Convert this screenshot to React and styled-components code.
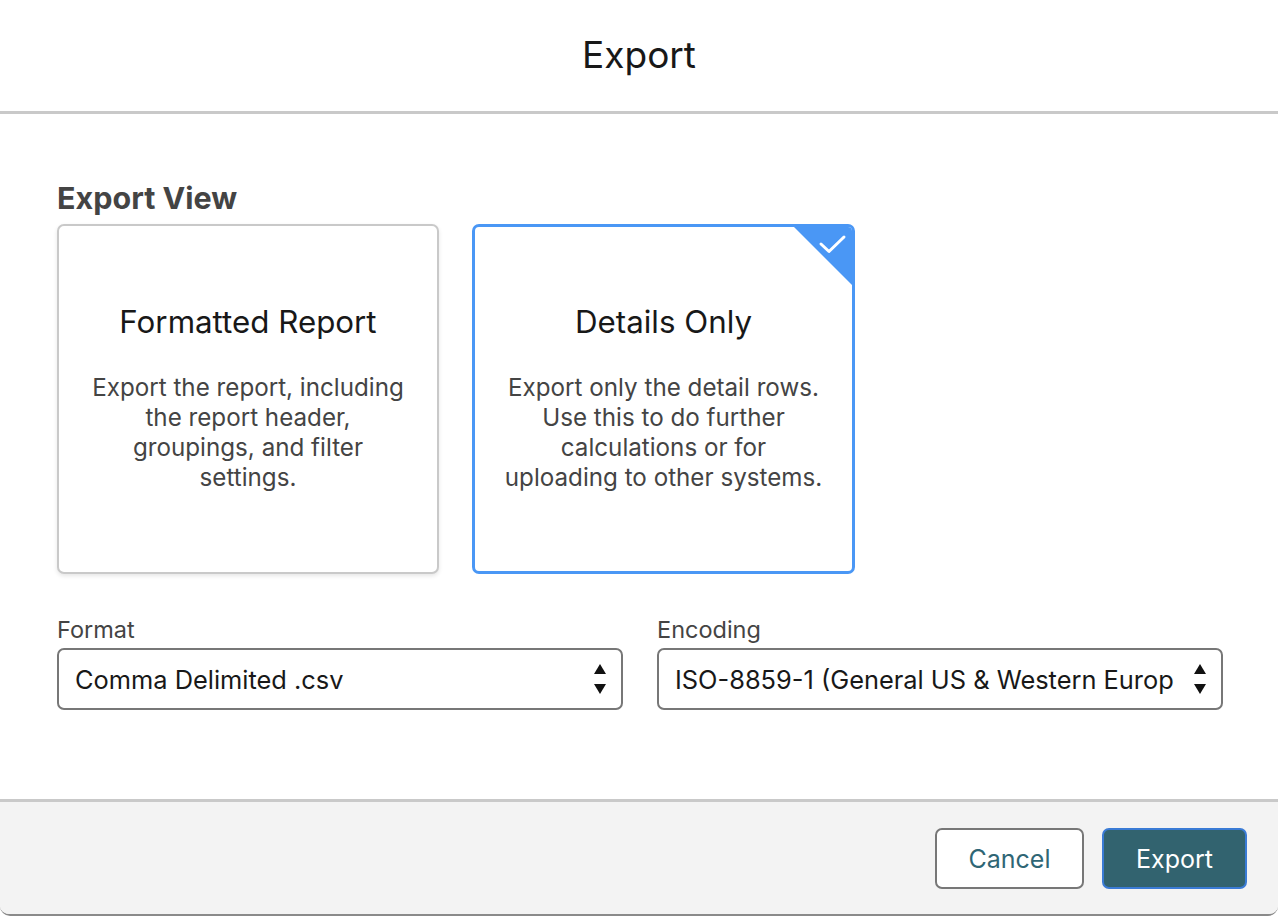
import React from "react";
import styled, { createGlobalStyle } from "styled-components";

const Global = createGlobalStyle`
  html, body { margin: 0; padding: 0; background: #ffffff; }
  body { font-family: Inter, "Liberation Sans", Arial, sans-serif; }
  * { box-sizing: border-box; }
`;

const Modal = styled.div`
  width: 1278px;
  height: 916px;
  display: flex;
  flex-direction: column;
  background: #fff;
  border-bottom: 2px solid #8a8a8a;
  border-radius: 0 0 10px 10px;
  overflow: hidden;
`;

const Header = styled.header`
  height: 114px;
  flex: none;
  display: flex;
  align-items: center;
  justify-content: center;
  border-bottom: 3px solid #c9c9c9;
  padding-bottom: 2px;
`;

const Title = styled.h1`
  margin: 0;
  font-weight: 400;
  font-size: 37px;
  line-height: 44px;
  color: #181818;
`;

const Body = styled.main`
  flex: 1;
  padding: 66px 55px 0 57px;
  display: flex;
  flex-direction: column;
`;

const SectionTitle = styled.h2`
  margin: 0 0 8px;
  font-size: 30.5px;
  line-height: 36px;
  font-weight: 700;
  color: #444444;
`;

const Cards = styled.div`
  display: flex;
  gap: 33px;
`;

const Card = styled.div`
  position: relative;
  width: ${(p) => (p.$selected ? "383px" : "382px")};
  height: 350px;
  border-radius: 7px;
  border: ${(p) => (p.$selected ? "3px solid #4a97f5" : "2px solid #c9c9c9")};
  box-shadow: ${(p) => (p.$selected ? "none" : "0 2px 4px rgba(0,0,0,0.1)")};
  background: #fff;
  display: flex;
  flex-direction: column;
  align-items: center;
  justify-content: center;
  gap: 34px;
  text-align: center;
  overflow: hidden;
`;

const CardTitle = styled.div`
  font-size: 31.3px;
  line-height: 34px;
  color: #181818;
`;

const CardText = styled.div`
  font-size: 24.2px;
  line-height: 30px;
  color: #444444;
  white-space: nowrap;
`;

const Corner = styled.div`
  position: absolute;
  top: 0;
  right: 0;
  width: 58px;
  height: 58px;
  svg { display: block; }
`;

const Fields = styled.div`
  margin-top: 42px;
  display: grid;
  grid-template-columns: 566px 566px;
  column-gap: 34px;
`;

const Field = styled.div`
  display: flex;
  flex-direction: column;
  gap: 4px;
`;

const Label = styled.label`
  font-size: 23.5px;
  line-height: 28px;
  color: #444444;
`;

const Select = styled.div`
  position: relative;
  height: 62px;
  border: 2px solid #777777;
  border-radius: 7px;
  display: flex;
  align-items: center;
  padding: 0 47px 0 16px;
  font-size: 25.4px;
  color: #181818;
`;

const SelectValue = styled.span`
  flex: 1;
  min-width: 0;
  white-space: nowrap;
  overflow: hidden;
`;

const Arrows = styled.span`
  position: absolute;
  right: 14px;
  top: 50%;
  transform: translateY(-50%);
  display: block;
  svg { display: block; }
`;

const Footer = styled.footer`
  flex: none;
  height: 115px;
  background: #f3f3f3;
  border-top: 3px solid #c9c9c9;
  display: flex;
  justify-content: flex-end;
  align-items: flex-start;
  gap: 18px;
  padding: 26px 31px 0 0;
`;

const Button = styled.button`
  height: 61px;
  padding: 0;
  width: ${(p) => p.$w}px;
  border-radius: 7px;
  font-family: inherit;
  font-size: 25px;
  cursor: pointer;
  border: 2px solid ${(p) => (p.$primary ? "#3a7bd5" : "#777777")};
  background: ${(p) => (p.$primary ? "#32636f" : "#ffffff")};
  color: ${(p) => (p.$primary ? "#ffffff" : "#2f6675")};
`;

function SelectArrows() {
  return (
    <Arrows>
      <svg width="14" height="34" viewBox="0 0 14 34">
        <path d="M7 2 L13 12 L1 12 Z" fill="#111" />
        <path d="M1 22 L13 22 L7 32 Z" fill="#111" />
      </svg>
    </Arrows>
  );
}

export default function App() {
  return (
    <>
      <Global />
      <Modal>
        <Header>
          <Title>Export</Title>
        </Header>
        <Body>
          <SectionTitle>Export View</SectionTitle>
          <Cards>
            <Card>
              <CardTitle>Formatted Report</CardTitle>
              <CardText>
                Export the report, including
                <br />
                the report header,
                <br />
                groupings, and filter
                <br />
                settings.
              </CardText>
            </Card>
            <Card $selected>
              <Corner>
                <svg width="58" height="58" viewBox="0 0 58 58">
                  <path d="M0 0 H58 V58 Z" fill="#4a97f5" />
                  <path
                    d="M27 17 L35 24.5 L50 10"
                    fill="none"
                    stroke="#fff"
                    strokeWidth="3"
                    strokeLinecap="round"
                    strokeLinejoin="round"
                  />
                </svg>
              </Corner>
              <CardTitle>Details Only</CardTitle>
              <CardText>
                Export only the detail rows.
                <br />
                Use this to do further
                <br />
                calculations or for
                <br />
                uploading to other systems.
              </CardText>
            </Card>
          </Cards>
          <Fields>
            <Field>
              <Label>Format</Label>
              <Select>
                <SelectValue>Comma Delimited .csv</SelectValue>
                <SelectArrows />
              </Select>
            </Field>
            <Field>
              <Label>Encoding</Label>
              <Select>
                <SelectValue>ISO-8859-1 (General US &amp; Western European)</SelectValue>
                <SelectArrows />
              </Select>
            </Field>
          </Fields>
        </Body>
        <Footer>
          <Button $w={149}>Cancel</Button>
          <Button $w={145} $primary>
            Export
          </Button>
        </Footer>
      </Modal>
    </>
  );
}
